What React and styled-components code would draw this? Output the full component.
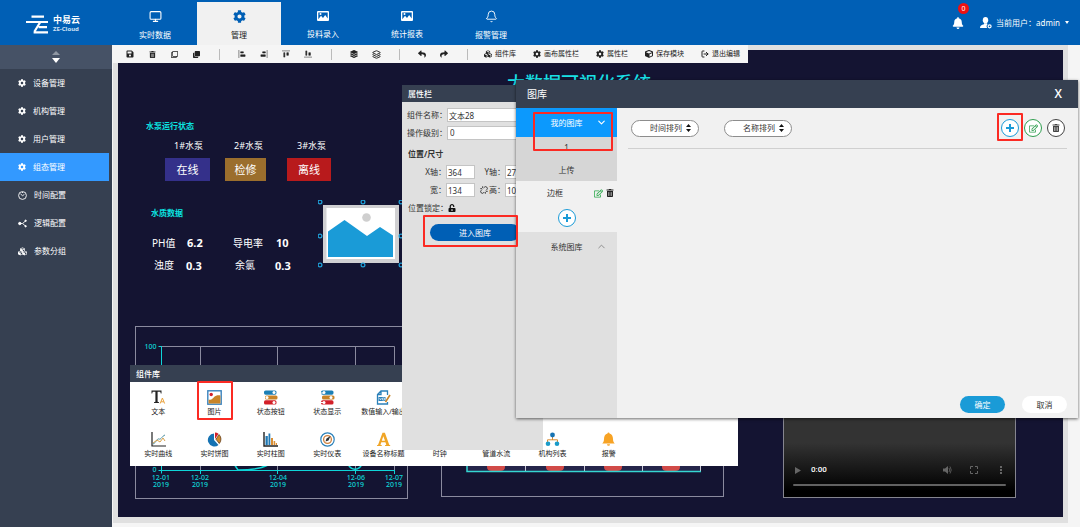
import React from 'react';
import styled, { createGlobalStyle } from 'styled-components';
import {
  FaSave, FaTrashAlt, FaRegClone, FaClone, FaReply, FaShare, FaCubes, FaCog, FaCube,
  FaBell, FaUnlockAlt, FaRegEdit, FaLayerGroup,
} from 'react-icons/fa';
import { LogOut, Monitor, Bell, ChevronDown, ChevronUp, Layers, Unlink } from 'lucide-react';

const color = {
  brand: '#005fb5',
  slate: '#364051',
  slateLight: '#465266',
  canvas: '#141432',
  cyan: '#0fd5d8',
  accent: '#1a9bd7',
  mark: '#fb2a23',
  panel: '#e0e0e0',
  page: '#f5f5f5',
};

const Global = createGlobalStyle`
  * { box-sizing: border-box; }
  body { margin: 0; background: ${color.page}; overflow: hidden; }
  body, button, input, select {
    font-family: "Noto Sans", "Noto Sans CJK SC", sans-serif;
    font-size: 8px;
    line-height: 12px;
  }
  button { border: 0; padding: 0; background: none; color: inherit; cursor: pointer; }
  svg { display: block; flex: none; }
`;

const Page = styled.div`
  display: flex;
  flex-direction: column;
  min-height: 100vh;
`;

const Header = styled.header`
  display: flex;
  height: 45px;
  background: ${color.brand};
  color: #fff;
`;

const Brand = styled.a`
  display: flex;
  align-items: center;
  gap: 5px;
  width: 113px;
  padding: 3px 0 0 26px;
  color: #fff;
  text-decoration: none;
`;

const BrandText = styled.span`
  display: flex;
  flex-direction: column;
  font-size: 9px;
  font-weight: 700;
  line-height: 10px;
  small { font-size: 6px; line-height: 9px; color: #cfe2f5; }
`;

const Tabs = styled.nav`
  display: flex;
  flex: 1;
  padding-top: 2px;
`;

const Tab = styled.a`
  display: flex;
  flex-direction: column;
  align-items: center;
  gap: 6px;
  width: 84px;
  padding-top: 8px;
  text-decoration: none;
  background: ${(p) => (p.$active ? '#f1f1f1' : 'transparent')};
  color: ${(p) => (p.$active ? '#222' : '#fff')};
  svg { color: ${(p) => (p.$active ? color.brand : '#fff')}; }
`;

const Account = styled.div`
  display: flex;
  align-items: center;
  gap: 4px;
  padding-right: 11px;
`;

const Alerts = styled.button`
  position: relative;
  margin-right: 12px;
`;

const Badge = styled.span`
  position: absolute;
  left: 6px;
  top: -14px;
  width: 11px;
  height: 11px;
  border-radius: 50%;
  background: #ee1010;
  font-size: 7px;
  line-height: 11px;
  text-align: center;
`;

const UserMenu = styled.button`
  display: flex;
  align-items: center;
  gap: 4px;
`;

const Caret = styled.span`
  margin-left: 1px;
  border: 2px solid transparent;
  border-top: 3px solid #fff;
  border-bottom: 0;
`;

const Body = styled.div`
  display: flex;
  flex: 1;
`;

const Sidebar = styled.nav`
  width: 112px;
  background: ${color.slate};
`;

const Collapse = styled.button`
  display: flex;
  flex-direction: column;
  align-items: center;
  justify-content: center;
  gap: 3px;
  width: 100%;
  height: 24px;
  background: ${color.slateLight};
`;

const SideItem = styled.a`
  display: flex;
  align-items: center;
  gap: 7px;
  height: 28px;
  margin-right: 3px;
  padding-left: 18px;
  color: #fff;
  text-decoration: none;
  background: ${(p) => (p.$active ? '#3399ff' : 'transparent')};
`;

const Main = styled.main`
  position: relative;
  flex: 1;
  padding: 0 12px 4px 1px;
`;

const Workspace = styled.div`
  padding: 5px 5px 6px;
  background: ${color.panel};
`;

const Canvas = styled.div`
  position: relative;
  min-height: calc(100vh - 60px);
  background: ${color.canvas};
  color: #fff;
  overflow: hidden;
`;

const Toolbar = styled.div`
  position: absolute;
  left: 1px;
  top: 0;
  display: flex;
  align-items: center;
  height: 18px;
  padding: 0 8px 0 6px;
  background: ${color.page};
  color: #222;
`;

const Tool = styled.button`
  display: flex;
  justify-content: center;
  width: 22px;
`;

const Divider = styled.span`
  width: 1px;
  height: 11px;
  margin: 0 11px 0 12px;
  background: #bbb;
`;

const ToolLinks = styled.div`
  display: flex;
  gap: 17px;
  padding-left: 5px;
`;

const ToolLink = styled.button`
  display: flex;
  align-items: center;
  gap: 3px;
  font-size: 7px;
`;

const Placed = styled.div`
  position: absolute;
  left: ${(p) => p.$x}px;
  top: ${(p) => p.$y}px;
`;

const Title = styled(Placed)`
  font-size: 18px;
  font-weight: 500;
  line-height: 24px;
  color: #19dfe4;
`;

const SectionName = styled(Placed)`
  font-weight: 700;
  color: #0be3e0;
`;

const PumpName = styled(Placed)`
  font-size: 9px;
`;

const PumpState = styled(Placed)`
  width: ${(p) => p.$w}px;
  font-size: 11px;
  line-height: 23px;
  text-align: center;
  background: ${(p) => p.$tone};
`;

const Measure = styled(Placed)`
  font-size: 10px;
  line-height: 14px;
`;

const Reading = styled(Placed)`
  font-size: 11px;
  font-weight: 700;
  line-height: 14px;
`;

const Video = styled(Placed)`
  display: flex;
  flex-direction: column;
  justify-content: flex-end;
  width: 233px;
  height: 122px;
  padding: 0 9px 11px;
  border: 1px solid #85858f;
  background: linear-gradient(#333 55%, #000 95%);
`;

const Controls = styled.div`
  display: flex;
  align-items: center;
  padding: 0 0 8px 2px;
  font-family: Roboto, sans-serif;
  color: #666;
  time { flex: 1; padding-left: 10px; color: #fff; font-weight: 500; }
`;

const ControlIcons = styled.span`
  display: flex;
  gap: 17px;
`;

const Progress = styled.div`
  height: 2px;
  border-radius: 1px;
  background: #626262;
`;

const Win = styled.section`
  position: absolute;
  left: ${(p) => p.$x}px;
  top: ${(p) => p.$y}px;
  width: ${(p) => p.$w}px;
`;

const WinTitle = styled.h2`
  margin: 0;
  padding-left: 6px;
  background: ${color.slate};
  color: #fff;
  font-size: 8px;
  font-weight: 500;
  line-height: 17px;
`;

const Library = styled(Win)`
  background: #fff;
`;

const LibraryRow = styled.div`
  display: grid;
  grid-template-columns: repeat(9, 1fr);
  height: 42px;
  margin-right: 101px;
`;

const Widget = styled.button`
  display: flex;
  flex-direction: column;
  align-items: center;
  gap: 2px;
  padding-top: 8px;
  font-size: 7px;
  line-height: 10px;
  white-space: nowrap;
  color: #222;
`;

const Properties = styled(Win)`
  height: 365px;
  background: ${color.panel};
  color: #333;
`;

const Form = styled.form`
  padding: 4px 6px;
`;

const FieldRow = styled.div`
  display: flex;
  align-items: center;
  height: 18px;
`;

const FieldName = styled.label`
  display: flex;
  justify-content: flex-end;
  width: ${(p) => p.$w}px;
  white-space: nowrap;
`;

const LinkRatio = styled.button`
  display: flex;
  justify-content: flex-end;
  width: 13px;
  color: #222;
`;

const Box = styled.input`
  width: ${(p) => p.$w}px;
  height: 14px;
  padding: 0 1px;
  border: 1px solid #c4c4c4;
  background: #fff;
  color: #333;
`;

const LevelBox = styled(Box)`
  appearance: none;
  padding-left: 2px;
`;

const FormHeading = styled.h3`
  margin: 0;
  padding-top: 6px;
  height: 21px;
  font-size: 8px;
  line-height: 12px;
`;

const OpenGallery = styled.button`
  display: block;
  width: 90px;
  height: 17px;
  margin: 7px 0 0 22px;
  border-radius: 9px;
  background: ${color.brand};
  color: #fff;
`;

const Dialog = styled(Win)`
  background: #f1f1f1;
  color: #333;
  box-shadow: 0 1px 3px rgba(0, 0, 0, 0.6);
`;

const DialogHead = styled.header`
  display: flex;
  align-items: center;
  justify-content: space-between;
  height: 28px;
  padding: 0 16px 0 11px;
  background: ${color.slate};
  color: #fff;
  h2 { margin: 0; font-size: 10px; font-weight: 400; line-height: 14px; }
  button { font: 600 12px/14px "Open Sans", sans-serif; }
`;

const DialogBody = styled.div`
  display: flex;
  height: 310px;
`;

const Albums = styled.div`
  display: flex;
  flex-direction: column;
  width: 101px;
`;

const AlbumGroup = styled.button`
  position: relative;
  height: 29px;
  background: ${(p) => (p.$open ? '#0c99fd' : color.panel)};
  color: ${(p) => (p.$open ? '#fff' : '#333')};
  svg { position: absolute; right: 10px; top: 9px; }
`;

const Album = styled.button`
  height: 22px;
  background: #d6d6d6;
`;

const CurrentAlbum = styled.div`
  display: flex;
  align-items: center;
  height: 24px;
  padding-left: 31px;
  span { width: 47px; }
  button + button { margin-left: 3px; }
`;

const AddRow = styled.div`
  display: flex;
  justify-content: center;
  height: 27px;
  padding-top: 4px;
`;

const AlbumFill = styled.div`
  flex: 1;
  background: ${color.panel};
`;

const Round = styled.button`
  display: flex;
  align-items: center;
  justify-content: center;
  width: 18px;
  height: 18px;
  border: 1px solid ${(p) => p.$tone};
  border-radius: 50%;
  background: #fff;
  color: ${(p) => p.$tone};
`;

const Gallery = styled.div`
  display: flex;
  flex: 1;
  flex-direction: column;
  justify-content: space-between;
  padding: 0 11px 5px;
`;

const Filters = styled.div`
  display: flex;
  align-items: center;
  gap: 25px;
  height: 41px;
  padding-left: 3px;
  border-bottom: 1px solid #d0d0d0;
`;

const SortWrap = styled.label`
  display: flex;
  align-items: center;
  width: 68px;
  height: 17px;
  padding: 0 7px 0 18px;
  border: 1px solid #8d8d8d;
  border-radius: 9px;
  background: #fff;
`;

const SortSelect = styled.select`
  flex: 1;
  min-width: 0;
  padding: 0;
  border: 0;
  appearance: none;
  background: none;
  color: #333;
`;

const Actions = styled.div`
  display: flex;
  gap: 5px;
  margin-left: auto;
  padding-right: 2px;
`;

const Footer = styled.footer`
  display: flex;
  justify-content: flex-end;
  gap: 17px;
`;

const Pill = styled.button`
  width: 45px;
  height: 17px;
  border-radius: 9px;
  background: ${(p) => (p.$primary ? color.accent : '#fff')};
  color: ${(p) => (p.$primary ? '#fff' : '#333')};
`;

const Mark = styled.div`
  position: absolute;
  left: ${(p) => p.$x}px;
  top: ${(p) => p.$y}px;
  width: ${(p) => p.$w}px;
  height: ${(p) => p.$h}px;
  border: 2px solid ${color.mark};
  border-radius: 1px;
  pointer-events: none;
`;

const Logo = () => (
  <svg width="22" height="19" viewBox="0 0 22 19" fill="none" stroke="#fff" strokeWidth="2.2">
    <path d="M5.5 1.6H18M0 7H22M14 7.500 8.500 16.500M7.600 17.400H22M12.600 12.200H21" />
  </svg>
);

const UserIcon = () => (
  <svg width="12" height="12" viewBox="0 0 12 12" fill="currentColor">
    <ellipse cx="5.500" cy="3.200" rx="2.700" ry="3.100" />
    <path d="M4 6.200h3l.5 1.100A3 3 0 0 0 7 11H0c0-2.600 1.500-3.200 4-3.800z" />
    <circle cx="9.600" cy="9.300" r="1.500" fill="none" stroke="currentColor" strokeWidth="1.200" />
  </svg>
);

const PlusIcon = () => (
  <svg width="8" height="8" viewBox="0 0 8 8" stroke="currentColor" strokeWidth="2">
    <path d="M4 0v8M0 4h8" />
  </svg>
);

const PhotoIcon = () => (
  <svg width="12" height="12" viewBox="0 0 12 12">
    <path fill="currentColor" fillRule="evenodd" d="M1 1h10a1 1 0 0 1 1 1v8a1 1 0 0 1-1 1H1a1 1 0 0 1-1-1V2a1 1 0 0 1 1-1zm.3 1.6v6.6L4 5.8l2 2.2 2.2-3 2.5 3.6v-6z" />
    <circle cx="3.5" cy="4" r="1" fill="currentColor" />
  </svg>
);

const ClockIcon = () => (
  <svg width="9" height="9" viewBox="0 0 9 9" fill="none" stroke="currentColor" strokeWidth=".9">
    <circle cx="4.5" cy="4.5" r="3.9" />
    <path d="M2.4 2.8 4.5 4.7 6.4 3.4M4.5 1v1" />
  </svg>
);

const BranchIcon = () => (
  <svg width="9" height="9" viewBox="0 0 9 9" fill="currentColor" stroke="currentColor">
    <circle cx="1.8" cy="4.5" r="1.2" />
    <path d="M2 4.5h2.6L7.4 2M4.6 4.5 7.4 7" fill="none" strokeWidth=".9" />
    <circle cx="7.6" cy="1.8" r=".7" />
    <circle cx="7.6" cy="7.2" r=".7" />
  </svg>
);

const alignShapes = {
  left: 'M1 0v9M3 2h3v1.4H3zM3 5.4h5v1.8H3z',
  right: 'M8 0v9M3 2h3v1.4H3zM1 5.4h5v1.8H1z',
  top: 'M0 1h9M2 3h1.2v5H2zM5.4 3h1.8v3H5.4z',
  bottom: 'M0 8h9M2 1h1.2v5H2zM5.4 3h1.8v3H5.4z',
};

const AlignIcon = ({ side }) => (
  <svg width="8" height="8" viewBox="0 0 9 9" fill="currentColor" stroke="currentColor" strokeWidth=".6">
    <path d={alignShapes[side]} />
  </svg>
);

const SortArrows = () => (
  <svg width="5" height="8" viewBox="0 0 5 8" fill="#111">
    <path d="M2.500 0 5 3H0zM2.500 8 0 5h5z" />
  </svg>
);

const stateBars = (knobs) => (
  <>
    {['#1c7fb5', '#c98428', '#d32029'].map((fill, i) => (
      <g key={fill}>
        <rect x={i === 1 ? 2 : 1} y={0.5 + i * 4.9} width="12.5" height="4.2" rx="1.6" fill={fill} />
        <circle cx={knobs[i]} cy={2.6 + i * 4.9} r="1.5" fill="#fff" />
      </g>
    ))}
  </>
);

const widgetArt = {
  text: (
    <>
      <path d="M.5.5h10v3h-.7l-.5-1.7H6.6v10l1.4.5v.7H3v-.7l1.4-.5v-10H1.7L1.2 3.5H.5z" fill="#222" />
      <path d="M9.2 13.5 11.4 8l2.2 5.5M10 11.8h2.8" fill="none" stroke="#e9a23c" />
    </>
  ),
  image: (
    <>
      <rect x=".8" y=".8" width="13.4" height="13.4" fill="#fff" stroke="#3b83bd" strokeWidth="1.4" />
      <path d="M1.6 9.5c3 1 4-1 5.5-2.500s4-2 6.300-1.500v8H1.600z" fill="#c98428" />
      <circle cx="4.200" cy="4.500" r="1.700" fill="#d32029" />
    </>
  ),
  button: stateBars([11, 4, 11]),
  display: (
    <>
      {stateBars([4, 11, 4])}
      <path d="M0 3h4M0 12.500h4" stroke="#fff" />
    </>
  ),
  value: (
    <>
      <path d="M11.500 5V1H5L1.500 4.500V14h10v-2M5 1v3.500H1.500" fill="none" stroke="#2a80b9" strokeWidth="1.300" />
      <path d="M2.500 7h7v4h-7z" fill="#2a80b9" />
      <path d="m3.500 8 1 2 1-2M6.500 8v2h2V8z" fill="none" stroke="#fff" strokeWidth=".6" />
      <path d="m9.500 12 4.500-7" stroke="#c98428" strokeWidth="1.600" />
    </>
  ),
  curve: (
    <>
      <path d="M1 0v14h14" fill="none" stroke="#222" strokeWidth="1.200" />
      <path d="M2 12c3-1 4-6 6-5s3-3 6-4" fill="none" stroke="#4d8f9f" />
      <path d="m2 11 4-3 3 2 3-4 2 3" fill="none" stroke="#d8a04a" />
    </>
  ),
  pie: (
    <>
      <path d="M7 1.500V8l4.500 5A6.500 6.500 0 1 1 7 1.500z" fill="#1673b3" />
      <path d="M8 .5a6.500 6.500 0 0 1 3.500 1.200L8 7z" fill="#d32029" />
      <path d="M9 7.300 12 2.500a6.500 6.500 0 0 1 .3 9z" fill="#d08a2a" stroke="#53341a" strokeWidth=".7" />
    </>
  ),
  bars: (
    <>
      <path d="M1 0v14h14" fill="none" stroke="#222" strokeWidth="1.400" />
      <path d="M2.500 4h2.300v9H2.500zM5.500 1.500h1.800V13H5.500z" fill="#2079b4" />
      <path d="M8 6h2v7H8zM10.600 9h1.600v4h-1.600zM12.800 11H14v2h-1.200z" fill="#d98e34" />
    </>
  ),
  gauge: (
    <>
      <circle cx="7.500" cy="7.500" r="6.700" fill="none" stroke="#2a80b9" strokeWidth="1.200" />
      <circle cx="7.500" cy="7.500" r="3.900" fill="none" stroke="#d0803a" strokeWidth="1.300" />
      <path d="m5.500 9.500 1-3 4-2.500-2 4.500z" fill="#333" />
    </>
  ),
  name: <path d="M6.500.8h2.400l4.300 12 1 .4v.9H9v-.9l1.300-.4-.9-2.600H5.300l-.9 2.600 1.400.4v.9H1v-.9l1.100-.4zM7.300 4.200 5.800 8.800H9z" fill="#f0a526" />,
  org: (
    <>
      <path d="M7.500 4v4M2.500 11V7.800h10V11" fill="none" stroke="#d98e34" />
      <circle cx="7.500" cy="3" r="2.400" fill="#1673b3" />
      <circle cx="3" cy="11.800" r="2.300" fill="#1a9bc9" />
      <circle cx="12" cy="11.800" r="2.300" fill="#1a9bc9" />
    </>
  ),
  alarm: <path d="M7.500.5a1 1 0 0 1 1 1C11 2.200 12 4.500 12 7c0 2.500.7 3.500 1.800 4.600H1.200C2.300 10.500 3 9.500 3 7c0-2.500 1-4.800 3.500-5.500a1 1 0 0 1 1-1zM6 12.300h3a1.500 1.500 0 0 1-3 0z" fill="#f7a325" />,
};

const WidgetIcon = ({ name }) => (
  <svg width="15" height="15" viewBox="0 0 15 15">{widgetArt[name]}</svg>
);

const libraryRows = [
  [['text', '文本'], ['image', '图片'], ['button', '状态按钮'], ['display', '状态显示'], ['value', '数值输入/输出']],
  [['curve', '实时曲线'], ['pie', '实时饼图'], ['bars', '实时柱图'], ['gauge', '实时仪表'], ['name', '设备名称标题'],
    ['', '时钟'], ['', '管道水流'], ['org', '机构列表'], ['alarm', '报警']],
];

const tabs = [
  ['实时数据', <Monitor size={13} />],
  ['管理', <FaCog size={13} />],
  ['投料录入', <PhotoIcon />],
  ['统计报表', <PhotoIcon />],
  ['报警管理', <Bell size={13} strokeWidth={1.7} />],
];

const sideItems = [
  ['设备管理', <FaCog size={8} />],
  ['机构管理', <FaCog size={8} />],
  ['用户管理', <FaCog size={8} />],
  ['组态管理', <FaCog size={8} />],
  ['时间配置', <ClockIcon />],
  ['逻辑配置', <BranchIcon />],
  ['参数分组', <FaCubes size={9} />],
];

const toolGroups = [
  [['保存', <FaSave size={8} />], ['删除', <FaTrashAlt size={7} />], ['复制', <FaRegClone size={7} />], ['粘贴', <FaClone size={7} />]],
  ['left', 'right', 'top', 'bottom'].map((s) => [s, <AlignIcon side={s} />]),
  [['置顶', <FaLayerGroup size={8} />], ['置底', <Layers size={9} strokeWidth={2.5} />]],
  [['撤销', <FaReply size={8} />], ['重做', <FaShare size={8} />]],
];

const toolLinks = [
  ['组件库', <FaCubes size={8} />],
  ['画布属性栏', <FaCog size={8} />],
  ['属性栏', <FaCog size={8} />],
  ['保存模块', <FaCube size={8} />],
  ['退出编辑', <LogOut size={8} strokeWidth={3} />],
];

const LineChart = () => (
  <svg width="274" height="174" viewBox="135 326 274 174">
    <g fill="none" stroke="#8a8a9e">
      <rect x="135.500" y="326.500" width="272" height="172" />
      <path d="M161 346.500H394.500V470M200.500 346.500V470M277.500 346.500V470M355.500 346.500V470" />
    </g>
    <g fill="none" stroke={color.cyan}>
      <path d="M158.500 346.500h3v127M158.500 470.500h236M200.500 470v4M277.500 470v4M355.500 470v4M394.500 470v4" />
      <path d="M234 464l4 6c12 0 22-1 30-5M348 464c3 7 11 7 14 0" strokeWidth="1.500" />
    </g>
    <g fill={color.cyan} fontSize="7" fontWeight="500" textAnchor="middle">
      <text x="150.500" y="348.500">100</text>
      <text x="154.500" y="472">0</text>
      {[[161, '12-01'], [200, '12-02'], [278, '12-04'], [356, '12-06'], [394, '12-07']].map(([x, day]) => (
        <g key={day}>
          <text x={x} y="480">{day}</text>
          <text x={x} y="487">2019</text>
        </g>
      ))}
    </g>
  </svg>
);

const BarChart = () => (
  <svg width="284" height="172" viewBox="441 326 284 172">
    <rect x="441.500" y="326.500" width="282" height="170" fill="none" stroke="#8a8a9e" />
    <rect x="467" y="346" width="234" height="125" fill="#25254a" />
    <path d="M525.500 346v125M584.500 346v125M642.500 346v125M700.500 346v125" stroke="#c9c9d6" />
    {[496, 555, 613, 671].map((x) => <path key={x} d={`M${x - 9} 350h18v117q0 4-5 4h-8q-5 0-5-4z`} fill="#d14a48" />)}
    <path d="M467 346v125.500h234" fill="none" stroke="#35d6d2" strokeWidth="1.500" />
  </svg>
);

const Picture = () => (
  <svg width="86" height="68" viewBox="318 200 86 68">
    <rect x="323" y="205" width="76" height="58" fill="#d0d0d2" />
    <rect x="326.500" y="208" width="68.500" height="51" fill="#fff" />
    <path d="M328 231.500 344.500 220 367 236l13-9 13 8.500V257H328z" fill={color.accent} />
    <circle cx="366.500" cy="217.500" r="4.300" fill="#cfcfcf" />
    <g fill={color.canvas} stroke="#1fa0d8" strokeWidth="1.200">
      {[202, 236, 265].map((y) => [320, 363, 401].map((x) => (
        x === 363 && y === 236 ? null : <circle key={x} cx={x} cy={y} r="1.900" />
      )))}
    </g>
  </svg>
);

const Board = () => (
  <Canvas>
    <Title $x={389} $y={21}>大数据可视化系统</Title>
    <SectionName $x={28} $y={70}>水泵运行状态</SectionName>
    <PumpName $x={56} $y={90}>1#水泵</PumpName>
    <PumpName $x={116} $y={90}>2#水泵</PumpName>
    <PumpName $x={179} $y={90}>3#水泵</PumpName>
    <PumpState $x={47} $y={108} $w={45} $tone="#34308a">在线</PumpState>
    <PumpState $x={107} $y={108} $w={41} $tone="#9b6e2d">检修</PumpState>
    <PumpState $x={169} $y={108} $w={44} $tone="#b81a1c">离线</PumpState>
    <SectionName $x={33} $y={157}>水质数据</SectionName>
    <Measure $x={34} $y={186}>PH值</Measure>
    <Reading $x={69} $y={186}>6.2</Reading>
    <Measure $x={115} $y={186}>导电率</Measure>
    <Reading $x={158} $y={186}>10</Reading>
    <Measure $x={36} $y={208}>浊度</Measure>
    <Reading $x={68} $y={209}>0.3</Reading>
    <Measure $x={117} $y={208}>余氯</Measure>
    <Reading $x={157} $y={209}>0.3</Reading>
    <Placed $x={200} $y={150}><Picture /></Placed>
    <Placed $x={17} $y={276}><LineChart /></Placed>
    <Placed $x={323} $y={276}><BarChart /></Placed>
    <Video $x={665} $y={326}>
      <Controls>
        <svg width="6" height="7" viewBox="0 0 6 7" fill="currentColor"><path d="M0 0v7l6-3.500z" /></svg>
        <time>0:00</time>
        <ControlIcons>
          <svg width="10" height="10" viewBox="0 0 10 10" fill="currentColor">
            <path d="M1 3.500h2L6 1v8L3 6.500H1z" />
            <path d="M7 3q1.500 2 0 4M8 1.500q2.500 3.500 0 7" fill="none" stroke="currentColor" strokeWidth=".8" />
          </svg>
          <svg width="10" height="10" viewBox="0 0 10 10" fill="none" stroke="currentColor">
            <path d="M1.500 4V1.500H4M6 1.500h2.500V4M8.500 6v2.500H6M4 8.500H1.500V6" />
          </svg>
          <svg width="10" height="10" viewBox="0 0 10 10" fill="currentColor">
            <path d="M4 1h2v2H4zM4 4h2v2H4zM4 7h2v2H4z" />
          </svg>
        </ControlIcons>
      </Controls>
      <Progress />
    </Video>
  </Canvas>
);

const ComponentLibrary = () => (
  <Library $x={18} $y={320} $w={608}>
    <WinTitle>组件库</WinTitle>
    {libraryRows.map((row, i) => (
      <LibraryRow key={i}>
        {row.map(([icon, label]) => (
          <Widget key={label}><WidgetIcon name={icon} />{label}</Widget>
        ))}
      </LibraryRow>
    ))}
  </Library>
);

const PropertyPanel = () => (
  <Properties $x={290} $y={40} $w={141}>
    <WinTitle>属性栏</WinTitle>
    <Form>
      <FieldRow>
        <FieldName htmlFor="name" $w={39}>组件名称：</FieldName>
        <Box id="name" $w={88} defaultValue="文本28" />
      </FieldRow>
      <FieldRow>
        <FieldName htmlFor="level" $w={39}>操作级别：</FieldName>
        <LevelBox as="select" id="level" $w={88}><option>0</option></LevelBox>
      </FieldRow>
      <FormHeading>位置/尺寸</FormHeading>
      <FieldRow>
        <FieldName htmlFor="x" $w={38}>X轴：</FieldName>
        <Box id="x" $w={29} defaultValue="364" />
        <FieldName htmlFor="y" $w={30}>Y轴：</FieldName>
        <Box id="y" $w={29} defaultValue="274" />
      </FieldRow>
      <FieldRow>
        <FieldName htmlFor="w" $w={38}>宽：</FieldName>
        <Box id="w" $w={29} defaultValue="134" />
        <LinkRatio type="button"><Unlink size={8} strokeWidth={2.5} /></LinkRatio>
        <FieldName htmlFor="h" $w={17}>高：</FieldName>
        <Box id="h" $w={29} defaultValue="103" />
      </FieldRow>
      <FieldRow>
        <FieldName htmlFor="lock" $w={40}>位置锁定：</FieldName>
        <button type="button" id="lock"><FaUnlockAlt size={8} color="#111" /></button>
      </FieldRow>
      <OpenGallery type="button">进入图库</OpenGallery>
    </Form>
  </Properties>
);

const Sort = ({ label }) => (
  <SortWrap>
    <SortSelect aria-label={label}><option>{label}</option></SortSelect>
    <SortArrows />
  </SortWrap>
);

const GalleryDialog = () => (
  <Dialog $x={404} $y={35} $w={562}>
    <DialogHead><h2>图库</h2><button>X</button></DialogHead>
    <DialogBody>
      <Albums>
        <AlbumGroup $open>我的图库<ChevronDown size={11} strokeWidth={2.5} /></AlbumGroup>
        <Album>1</Album>
        <Album>上传</Album>
        <CurrentAlbum>
          <span>边框</span>
          <button><FaRegEdit size={9} color="#2aa84a" /></button>
          <button><FaTrashAlt size={8} color="#222" /></button>
        </CurrentAlbum>
        <AddRow><Round $tone={color.accent}><PlusIcon /></Round></AddRow>
        <AlbumGroup>系统图库<ChevronUp size={11} color="#888" /></AlbumGroup>
        <AlbumFill />
      </Albums>
      <Gallery>
        <Filters>
          <Sort label="时间排列" />
          <Sort label="名称排列" />
          <Actions>
            <Round $tone={color.accent}><PlusIcon /></Round>
            <Round $tone="#2f9e4f"><FaRegEdit size={9} /></Round>
            <Round $tone="#444"><FaTrashAlt size={8} /></Round>
          </Actions>
        </Filters>
        <Footer>
          <Pill $primary>确定</Pill>
          <Pill>取消</Pill>
        </Footer>
      </Gallery>
    </DialogBody>
  </Dialog>
);

export default function App() {
  return (
    <Page>
      <Global />
      <Header>
        <Brand href="#">
          <Logo />
          <BrandText>中易云<small>ZE-Cloud</small></BrandText>
        </Brand>
        <Tabs>
          {tabs.map(([label, icon], i) => (
            <Tab key={label} href="#" $active={i === 1}>{icon}{label}</Tab>
          ))}
        </Tabs>
        <Account>
          <Alerts><FaBell size={12} /><Badge>0</Badge></Alerts>
          <UserMenu><UserIcon />当前用户：admin <Caret /></UserMenu>
        </Account>
      </Header>
      <Body>
        <Sidebar>
          <Collapse>
            <svg width="8" height="4" viewBox="0 0 8 4" fill="#8f97a3"><path d="M4 0 8 4H0z" /></svg>
            <svg width="8" height="5" viewBox="0 0 8 5" fill="#fff"><path d="M4 5 0 0h8z" /></svg>
          </Collapse>
          {sideItems.map(([label, icon], i) => (
            <SideItem key={label} href="#" $active={i === 3}>{icon}{label}</SideItem>
          ))}
        </Sidebar>
        <Main>
          <Workspace><Board /></Workspace>
          <Toolbar>
            {toolGroups.map((group, i) => (
              <React.Fragment key={i}>
                {group.map(([name, icon]) => <Tool key={name}>{icon}</Tool>)}
                <Divider />
              </React.Fragment>
            ))}
            <ToolLinks>
              {toolLinks.map(([label, icon]) => <ToolLink key={label}>{icon}{label}</ToolLink>)}
            </ToolLinks>
          </Toolbar>
          <ComponentLibrary />
          <PropertyPanel />
          <GalleryDialog />
          <Mark $x={421} $y={67} $w={80} $h={39} />
          <Mark $x={311} $y={170} $w={95} $h={32} />
          <Mark $x={85} $y={336} $w={36} $h={39} />
          <Mark $x={885} $y={68} $w={26} $h={28} />
        </Main>
      </Body>
    </Page>
  );
}
